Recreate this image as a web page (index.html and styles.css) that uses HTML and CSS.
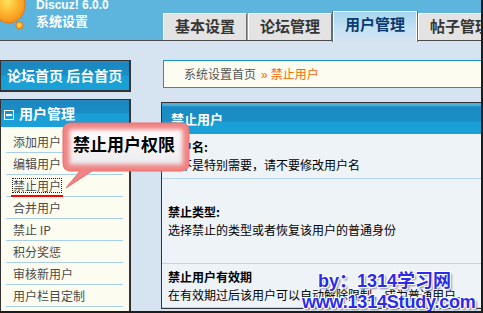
FILE: index.html
```html
<!DOCTYPE html>
<html lang="zh-CN">
<head>
<meta charset="utf-8">
<title>系统设置</title>
<link rel="stylesheet" href="styles.css">
</head>
<body>
<div class="page">
  <header class="top">
    <div class="brand">
      <svg class="logo" viewBox="0 0 30 32" width="30" height="32">
        <defs>
          <radialGradient id="lg" cx="0.45" cy="0.4" r="0.65">
            <stop offset="0" stop-color="#ffe35c"/>
            <stop offset="0.55" stop-color="#fcb22c"/>
            <stop offset="1" stop-color="#f28a16"/>
          </radialGradient>
        </defs>
        <ellipse cx="9" cy="5" rx="16" ry="18" fill="url(#lg)" stroke="#e27a12" stroke-width="1"/>
        <circle cx="19.5" cy="25.5" r="3.6" fill="url(#lg)" stroke="#e27a12" stroke-width="1"/>
      </svg>
      <div class="brand-text">
        <div class="ver">Discuz! 6.0.0</div>
        <div class="title">系统设置</div>
      </div>
    </div>
    <nav class="tabs">
      <a class="tab">基本设置</a>
      <a class="tab">论坛管理</a>
      <a class="tab on">用户管理</a>
      <a class="tab">帖子管理</a>
    </nav>
  </header>
  <div class="body">
    <aside class="side">
      <div class="box quick"><div class="bar">论坛首页 后台首页</div></div>
      <div class="box menu">
        <div class="bar"><span class="minus"></span>用户管理</div>
        <ul>
          <li>添加用户</li>
          <li>编辑用户</li>
          <li><span class="focus">禁止用户</span></li>
          <li>合并用户</li>
          <li>禁止 IP</li>
          <li>积分奖惩</li>
          <li>审核新用户</li>
          <li>用户栏目定制</li>
        </ul>
      </div>
    </aside>
    <main class="main">
      <div class="crumb">系统设置首页<span class="sep">»</span><span class="cur">禁止用户</span></div>
      <div class="panel">
        <div class="bar">禁止用户</div>
        <div class="row r1"><b>用户名:</b><span>如不是特别需要，请不要修改用户名</span></div>
        <div class="row r2"><b>禁止类型:</b><span>选择禁止的类型或者恢复该用户的普通身份</span></div>
        <div class="row r3"><b>禁止用户有效期</b><span>在有效期过后该用户可以自动解除限制，成为普通用户。</span></div>
      </div>
    </main>
  </div>
  <div class="bubble">
    <svg class="bubble-bg" viewBox="0 0 134 72" width="134" height="72">
      <defs>
        <linearGradient id="bi" x1="0" y1="0" x2="0" y2="1">
          <stop offset="0" stop-color="#ffffff"/>
          <stop offset="1" stop-color="#e2e2e8"/>
        </linearGradient>
        <clipPath id="bc"><path d="M11,3 H121 Q129,3 129,11 V43 Q129,51 121,51 H32 L6,68 L20,51 H11 Q3,51 3,43 V11 Q3,3 11,3 Z"/></clipPath>
        <filter id="bl" x="-20%" y="-20%" width="140%" height="140%"><feGaussianBlur stdDeviation="2"/></filter>
      </defs>
      <path d="M11,3 H121 Q129,3 129,11 V43 Q129,51 121,51 H32 L6,68 L20,51 H11 Q3,51 3,43 V11 Q3,3 11,3 Z" fill="url(#bi)"/>
      <g clip-path="url(#bc)">
        <path d="M11,3 H121 Q129,3 129,11 V43 Q129,51 121,51 H32 L6,68 L20,51 H11 Q3,51 3,43 V11 Q3,3 11,3 Z" fill="none" stroke="#f08484" stroke-width="13" filter="url(#bl)"/>
      </g>
      <path d="M11,3 H121 Q129,3 129,11 V43 Q129,51 121,51 H32 L6,68 L20,51 H11 Q3,51 3,43 V11 Q3,3 11,3 Z" fill="none" stroke="#ec6c6c" stroke-width="1"/>
    </svg>
    <span class="bubble-text">禁止用户权限</span>
  </div>
  <div class="wm">
    <div class="wm1">by：1314学习网</div>
    <div class="wm2">www.1314Study.com</div>
  </div>
</div>
</body>
</html>
```
FILE: styles.css
```css
* { box-sizing: border-box; margin: 0; padding: 0; }
html, body { width: 483px; height: 313px; overflow: hidden; background: #d6e3f1; }
body { font-family: "Noto Sans CJK SC", "Liberation Sans", sans-serif; font-size: 12px; color: #000; }

.page {
  position: relative;
  width: 483px;
  height: 313px;
  border-right: 2px solid #1c1c1c;
  border-bottom: 2px solid #1c1c1c;
  overflow: hidden;
  background: #d6e3f1;
}

/* header */
.top {
  display: flex;
  height: 41px;
  background: #5db5de;
  border-bottom: 1px solid #4a4a4a;
}
.brand { width: 163px; flex: none; display: flex; }
.logo { display: block; flex: none; }
.brand-text { margin-left: 6px; color: #fff; font-weight: bold; }
.ver { font-family: "Liberation Sans", sans-serif; font-size: 12px; line-height: 12px; margin-top: -1px; }
.title { font-family: "Noto Sans CJK SC", sans-serif; font-size: 13px; line-height: 13px; margin-top: 3px; }

.tabs { display: flex; gap: 1px; align-items: flex-end; align-self: flex-end; }
.tab {
  flex: none;
  width: 84px;
  height: 27px;
  background: #e3e3e3;
  border-top: 1px solid #fff;
  border-left: 1px solid #fff;
  border-right: 1px solid #6e6e6e;
  font: bold 15px/23px "Noto Sans CJK SC", sans-serif;
  color: #363636;
  text-align: center;
}
.tab.on {
  position: relative;
  height: 31px;
  margin-bottom: -2px;
  line-height: 24px;
  color: #0b3a6e;
  border: 1px solid #fff;
  border-bottom: none;
  box-shadow: -1px 0 0 #5a6a78, 1px 0 0 #5a6a78;
  background: linear-gradient(#a6d6ee, #c4e1f3 55%, #d6e3f1);
}

/* body */
.body { display: flex; padding-top: 19px; }
.side { width: 131px; flex: none; }
.box {
  border: 1px solid #333;
  border-right-width: 2px;
  background: #fcfcf0;
}
.bar {
  color: #fff;
  font: bold 14px/29px "Noto Sans CJK SC", sans-serif;
  white-space: nowrap;
  background: linear-gradient(#2a86bc 0, #1b88c0 10%, #1a8ec6 48%, #1a9ed6 52%, #1aa1d8 100%);
}
.quick { height: 32px; border-bottom-width: 2px; }
.quick .bar { padding-left: 6px; height: 29px; }
.menu { margin-top: 7px; height: 216px; border-bottom: none; }
.menu .bar { height: 27px; line-height: 27px; padding-left: 3px; }
.minus {
  display: inline-block;
  position: relative;
  width: 10px;
  height: 10px;
  border: 1px solid #fff;
  margin-right: 5px;
  vertical-align: -1px;
}
.minus::after {
  content: "";
  position: absolute;
  left: 1px;
  right: 1px;
  top: 3px;
  height: 2px;
  background: #fff;
}
.menu ul { list-style: none; padding-top: 4px; }
.menu li {
  margin: 0 6px 0 5px;
  height: 22px;
  border-bottom: 1px solid #a9cfe9;
  padding-left: 7px;
  line-height: 21px;
  color: #4a4a4a;
  font-size: 12px;
}
.focus {
  position: relative;
  display: inline-block;
  line-height: 13px;
  border: 1px dotted #222;
  margin-left: -1px;
}
.focus::after {
  content: "";
  position: absolute;
  left: -2px;
  right: -2px;
  bottom: -5px;
  height: 2px;
  background: #f00;
}

.main { margin-left: 30px; width: 340px; flex: none; }
.crumb {
  margin-left: 2px;
  height: 28px;
  border: 1px solid #1b90c9;
  background: #fcfcf1;
  padding-left: 20px;
  line-height: 26px;
  color: #555;
  font-size: 12px;
}
.crumb .sep { color: #f60; margin: 0 3px 0 5px; font-family: "Liberation Sans", sans-serif; }
.crumb .cur { color: #f60; }

.panel { margin-top: 14px; border: 1px solid #333; background: #eef3f8; }
.panel .bar {
  height: 31px;
  line-height: 31px;
  font-size: 13px;
  padding-left: 9px;
  background: linear-gradient(#4eaed8 0, #4eaed8 8%, #1a8bc3 12%, #1a8ec6 58%, #19a0d6 62%, #19a2d8 100%);
}
.row {
  display: flex;
  flex-direction: column;
  justify-content: center;
  border-bottom: 1px solid #b9d5ec;
  padding-left: 6px;
  line-height: 18px;
  font-size: 12px;
  color: #000;
}
.row b { font-weight: bold; }
.r1 { height: 45px; }
.r2 { height: 85px; }
.r3 { height: 44px; }

/* annotation bubble */
.bubble { position: absolute; left: 60px; top: 120px; width: 134px; height: 72px; }
.bubble-bg { position: absolute; left: 0; top: 0; }
.bubble-text {
  position: absolute;
  left: 13px;
  top: 14px;
  font: bold 17px/20px "Noto Sans CJK SC", sans-serif;
  color: #000;
  white-space: nowrap;
}

/* watermark */
.wm {
  position: absolute;
  left: 300px;
  top: 271px;
  font: bold 18px/21px "Liberation Sans", "Noto Sans CJK SC", sans-serif;
  color: #2c2ce8;
  white-space: nowrap;
  text-shadow: 1px 1px 0 #fff, -1px -1px 0 #fff, 1px -1px 0 #fff, -1px 1px 0 #fff, 2px 2px 2px #8a8a9a;
}
.wm1 { padding-left: 18px; }
.wm2 { padding-left: 2px; letter-spacing: -0.2px; }
```
